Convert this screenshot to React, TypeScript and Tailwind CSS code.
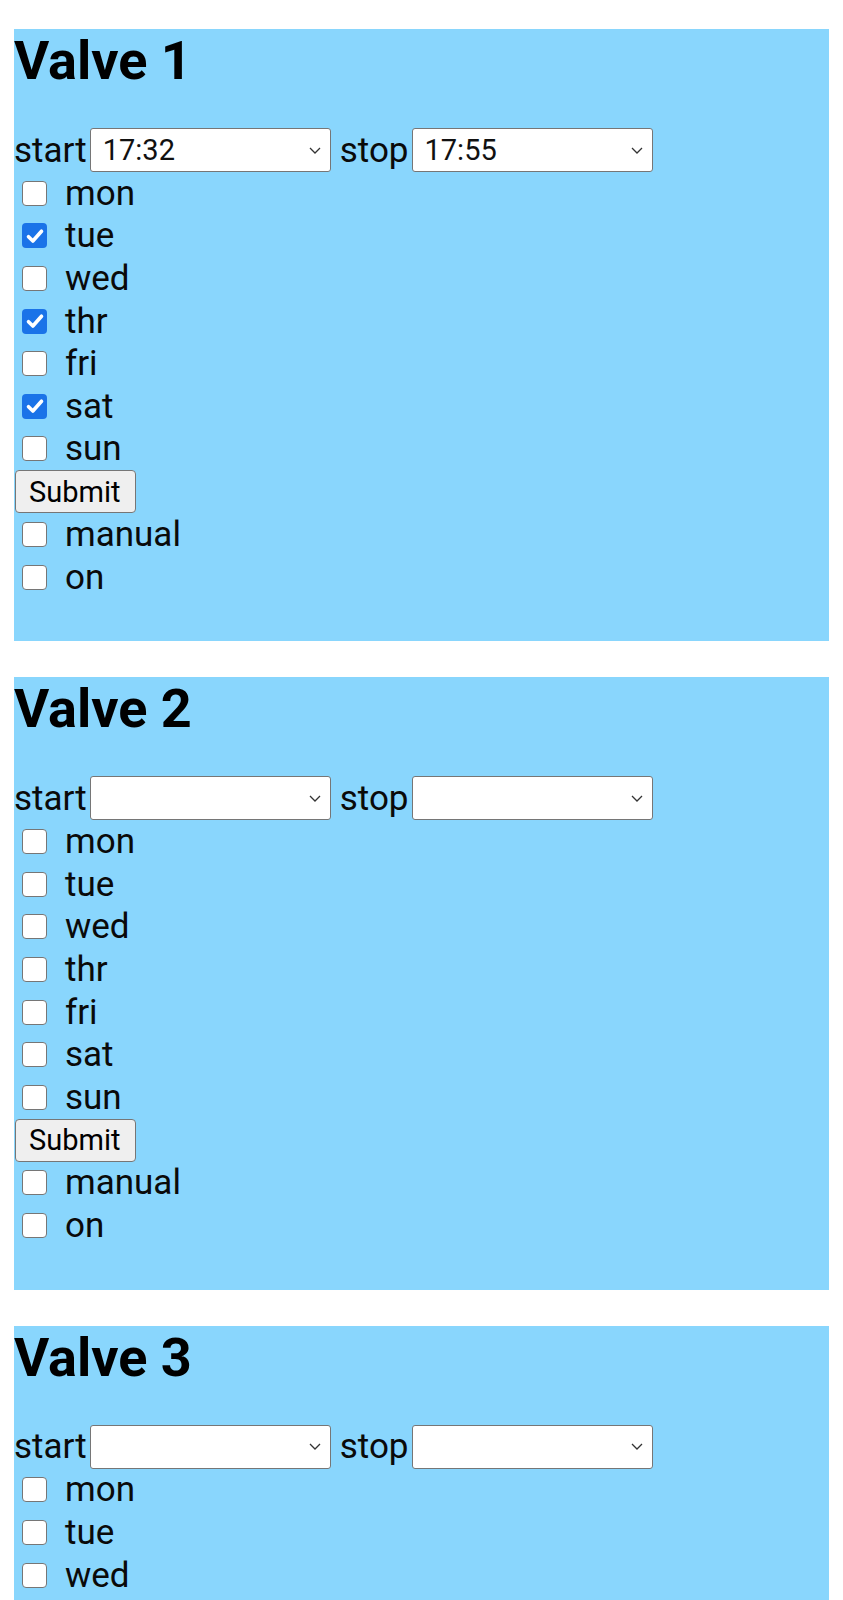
import React from "react";

const days = ["mon", "tue", "wed", "thr", "fri", "sat", "sun"];

function Check({ checked }: { checked: boolean }) {
  return checked ? (
    <span className="ml-[8px] mr-[18px] flex h-[25px] w-[25px] shrink-0 items-center justify-center rounded-[4px] bg-[#1a73e8]">
      <svg width="20" height="20" viewBox="0 0 16 16" fill="none">
        <path d="M2.8 8.6 L6.3 12 L13.2 4.2" stroke="white" strokeWidth="2.9" strokeLinecap="round" strokeLinejoin="round" />
      </svg>
    </span>
  ) : (
    <span className="ml-[8px] mr-[18px] block h-[25px] w-[25px] shrink-0 rounded-[4px] border-[1.5px] border-[#767676] bg-white" />
  );
}

function Row({ label, checked }: { label: string; checked: boolean }) {
  return (
    <div className="flex h-[42.6px] items-center">
      <Check checked={checked} />
      <span className="text-[35px] leading-[41px]">{label}</span>
    </div>
  );
}

function Select({ value }: { value: string }) {
  return (
    <div className="ml-[3px] flex h-[44px] w-[241px] shrink-0 items-center justify-between rounded-[3px] border border-[#767676] bg-white pl-[12px] pr-[9px]">
      <span className="text-[29px] leading-[34px] text-[#111]">{value}</span>
      <svg width="12" height="7" viewBox="0 0 12 7" fill="none">
        <path d="M1 1 L6 6 L11 1" stroke="#333" strokeWidth="1.3" />
      </svg>
    </div>
  );
}

function Valve({ n, start, stop, checked }: { n: number; start: string; stop: string; checked: string[] }) {
  return (
    <div className="mx-[14px] bg-[#89d6fd] pb-[43px]">
      <h1 className="mb-[36px] text-[54px] font-bold leading-[63px] text-black">Valve {n}</h1>
      <div className="flex h-[44px] items-center">
        <span className="text-[35px] leading-[41px]">start</span>
        <Select value={start} />
        <span className="ml-[9px] text-[35px] leading-[41px]">stop</span>
        <Select value={stop} />
      </div>
      {days.map((d) => (
        <Row key={d} label={d} checked={checked.includes(d)} />
      ))}
      <button className="ml-[1px] flex h-[43px] w-[121px] items-center rounded-[4px] border border-[#767676] bg-[#efefef] pl-[13px] text-[29px] leading-[34px] text-black">
        Submit
      </button>
      <Row label="manual" checked={false} />
      <Row label="on" checked={false} />
    </div>
  );
}

export default function App() {
  return (
    <div className="h-[1600px] overflow-hidden bg-white pt-[29px] text-[#0a0a0a]" style={{ fontFamily: "Roboto, 'Noto Sans', sans-serif" }}>
      <div className="flex flex-col gap-[36px]">
        <Valve n={1} start="17:32" stop="17:55" checked={["tue", "thr", "sat"]} />
        <Valve n={2} start="" stop="" checked={[]} />
        <Valve n={3} start="" stop="" checked={[]} />
      </div>
    </div>
  );
}
